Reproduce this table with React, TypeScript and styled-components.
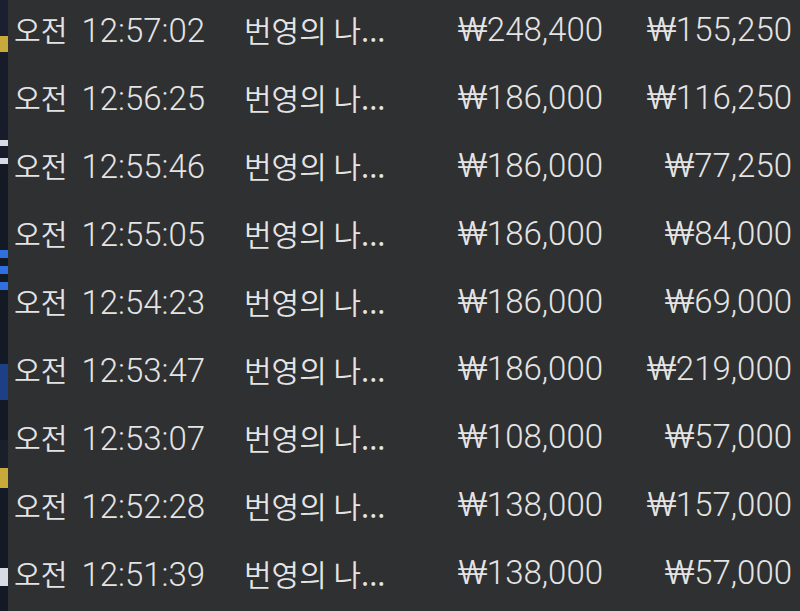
import React from "react";
import styled, { createGlobalStyle } from "styled-components";

type Trade = {
  time: string;
  name: string;
  bet: number;
  win: number;
};

const trades: Trade[] = [
  { time: "12:57:02", name: "번영의 나...", bet: 248400, win: 155250 },
  { time: "12:56:25", name: "번영의 나...", bet: 186000, win: 116250 },
  { time: "12:55:46", name: "번영의 나...", bet: 186000, win: 77250 },
  { time: "12:55:05", name: "번영의 나...", bet: 186000, win: 84000 },
  { time: "12:54:23", name: "번영의 나...", bet: 186000, win: 69000 },
  { time: "12:53:47", name: "번영의 나...", bet: 186000, win: 219000 },
  { time: "12:53:07", name: "번영의 나...", bet: 108000, win: 57000 },
  { time: "12:52:28", name: "번영의 나...", bet: 138000, win: 157000 },
  { time: "12:51:39", name: "번영의 나...", bet: 138000, win: 57000 },
];

const GlobalStyle = createGlobalStyle`
  html, body {
    margin: 0;
    padding: 0;
    background: #2f3031;
    overflow: hidden;
  }
`;

const Screen = styled.div`
  display: flex;
  width: 800px;
  height: 611px;
  overflow: hidden;
  font-family: Roboto, "Noto Sans CJK KR", sans-serif;
`;

// sliver of the page underneath the popup
const EdgeStrip = styled.div`
  width: 8px;
  flex-shrink: 0;
  background: linear-gradient(
    to bottom,
    #1b2030 0px,
    #1b2030 36px,
    #c9a93a 36px,
    #c9a93a 52px,
    #171c2a 52px,
    #171c2a 140px,
    #d8dbe4 140px,
    #d8dbe4 146px,
    #171c2a 146px,
    #171c2a 158px,
    #d8dbe4 158px,
    #d8dbe4 164px,
    #141926 164px,
    #141926 250px,
    #2f6fe0 250px,
    #2f6fe0 258px,
    #141926 258px,
    #141926 266px,
    #2f6fe0 266px,
    #2f6fe0 274px,
    #141926 274px,
    #141926 282px,
    #2f6fe0 282px,
    #2f6fe0 290px,
    #141926 290px,
    #141926 364px,
    #1d3f86 364px,
    #1d3f86 400px,
    #141926 400px,
    #141926 440px,
    #1a1f2c 440px,
    #1a1f2c 468px,
    #c9a93a 468px,
    #c9a93a 488px,
    #141926 488px,
    #141926 568px,
    #d8dbe4 568px,
    #d8dbe4 586px,
    #141926 586px
  );
`;

const Panel = styled.div`
  flex: 1;
  background: #2f3031;
  display: flex;
  flex-direction: column;
  padding: 0 8px 0 6px;
`;

const Row = styled.div`
  display: grid;
  grid-template-columns: 230px 140px 219px 1fr;
  align-items: center;
  height: 68px;
  padding-bottom: 9px;
  box-sizing: border-box;
  color: #e4e4e4;
  font-size: 33px;
  font-weight: 300;
  white-space: nowrap;
`;

const Cell = styled.span<{ $align?: "left" | "right" }>`
  text-align: ${(p) => p.$align ?? "left"};
`;

const Hangul = styled.span<{ $size?: number }>`
  font-family: "Noto Sans CJK KR", sans-serif;
  font-weight: 350;
  font-size: ${(p) => p.$size ?? 30}px;
`;

const Meridiem = styled(Hangul)`
  margin-right: 14px;
`;

const Won = styled.span`
  display: inline-block;
  width: 29px;
  text-align: center;
  transform: scaleX(1.2);
`;

function Money({ value }: { value: number }) {
  return (
    <>
      <Won>₩</Won>
      {value.toLocaleString("en-US")}
    </>
  );
}

export default function App() {
  return (
    <>
      <GlobalStyle />
      <Screen>
        <EdgeStrip />
        <Panel>
          {trades.map((t, i) => (
            <Row key={i}>
              <Cell>
                <Meridiem $size={29}>오전</Meridiem>
                {t.time}
              </Cell>
              <Cell>
                <Hangul $size={30}>{t.name}</Hangul>
              </Cell>
              <Cell $align="right">
                <Money value={t.bet} />
              </Cell>
              <Cell $align="right">
                <Money value={t.win} />
              </Cell>
            </Row>
          ))}
        </Panel>
      </Screen>
    </>
  );
}
